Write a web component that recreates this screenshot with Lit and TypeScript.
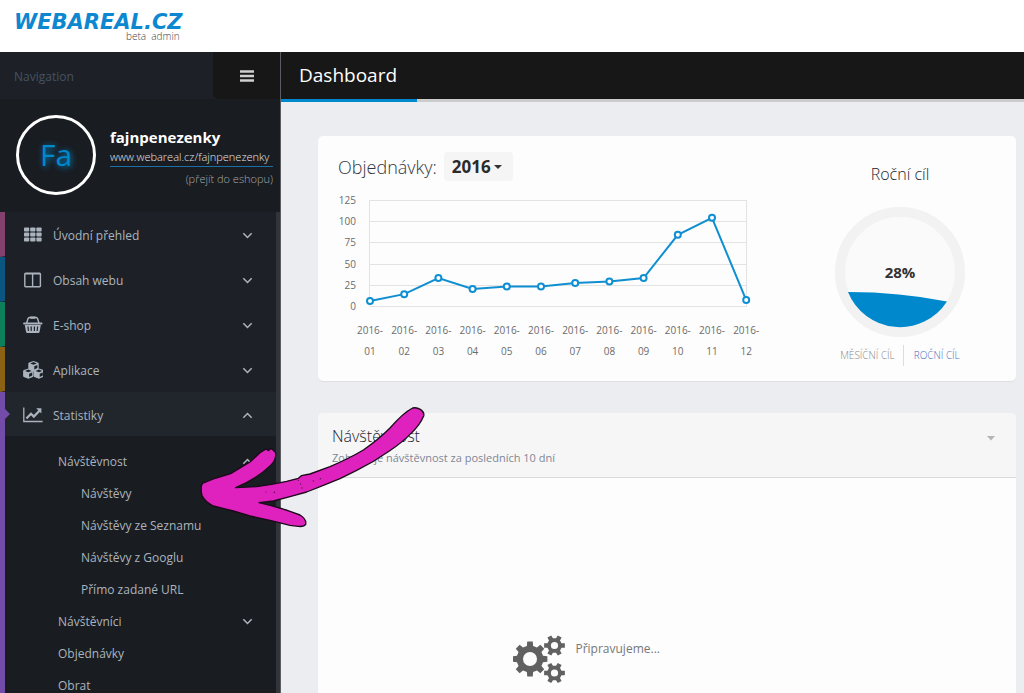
import { LitElement, html, svg, css, nothing } from "lit";
import { customElement } from "lit/decorators.js";
import { classMap } from "lit/directives/class-map.js";

const iconGrid = svg`<g fill="currentColor">${[0, 1, 2].map((r) =>
  [0, 1, 2].map(
    (c) => svg`<rect x=${1 + c * 6.2} y=${2.5 + r * 5} width="5.2" height="4" rx="0.8"/>`
  )
)}</g>`;

const iconColumns = svg`<path fill="none" stroke="currentColor" stroke-width="1.4" d="M2.6 3.2h14a.8.8 0 0 1 .8.8v12a.8.8 0 0 1-.8.8h-14a.8.8 0 0 1-.8-.8V4a.8.8 0 0 1 .8-.8zM9.6 3.2v13.6M1.8 3.9h15.6"/>`;

const iconBasket = svg`
  <path fill="none" stroke="currentColor" stroke-width="1.5" d="M3.6 8.4 5 3.6Q5.300 2.600 6.500 2.600h6.600q1.200 0 1.500 1L16 8.400"/>
  <path fill="currentColor" d="M7.200 1.500h5.200v2.200H7.200zM1 7.600h17.600q.9 0 .9 1t-.9 1H1q-.9 0-.9-1t.9-1z"/>
  <path fill="currentColor" fill-rule="evenodd" d="M1.800 10h16l-1.200 6.800q-.2 1.300-1.400 1.300H4.400q-1.200 0-1.400-1.300zM4.400 11.400l.5 4.600h1.100l-.4-4.600zM7.500 11.400l.2 4.600h1.100v-4.600zM10.800 11.400v4.600h1.100l.2-4.600zM14 11.400l-.4 4.600h1.100l.5-4.600z"/>`;

const cube = (x: number, y: number) => svg`<g transform="translate(${x} ${y})">
  <path fill="currentColor" d="M0-5 4.300-3.500Q5.200-3 5.200-2.200V2.400Q5.200 3.100 4.500 3.500L0 5.400-4.500 3.500Q-5.200 3.100-5.200 2.400V-2.200Q-5.200-3-4.300-3.500z"/>
  <path fill="#1d2127" d="M0-3.800 3.300-2.500 0-1.200-3.300-2.500zM.8.400 3.900-.9v2.900L.8 3.500z"/></g>`;

const iconCubes = svg`${cube(10.500, 5.900)}${cube(5.300, 13.400)}${cube(15.900, 13.400)}`;

const iconChart = svg`
  <path fill="none" stroke="currentColor" stroke-width="1.300" d="M.8 2.500v14h18.800"/>
  <path fill="none" stroke="currentColor" stroke-width="2.300" d="M3.400 13.500 8 8.800l2.800 2.800 5.700-5.900"/>
  <path fill="currentColor" d="M13.200 3.200h5.200v5.200z"/>`;

interface SubItem {
  label: string;
  open?: boolean;
  children?: string[];
}

interface NavItem {
  label: string;
  tone: string;
  icon: unknown;
  sub?: SubItem[];
}

const NAV: NavItem[] = [
  { label: "Úvodní přehled", tone: "plum", icon: iconGrid },
  { label: "Obsah webu", tone: "blue", icon: iconColumns },
  { label: "E-shop", tone: "green", icon: iconBasket },
  { label: "Aplikace", tone: "amber", icon: iconCubes },
  {
    label: "Statistiky",
    tone: "violet",
    icon: iconChart,
    sub: [
      {
        label: "Návštěvnost",
        open: true,
        children: ["Návštěvy", "Návštěvy ze Seznamu", "Návštěvy z Googlu", "Přímo zadané URL"],
      },
      { label: "Návštěvníci", children: [] },
      { label: "Objednávky" },
      { label: "Obrat" },
    ],
  },
];

const chevron = (up = false) => html`<svg class="chevron" viewBox="0 0 10 10" aria-hidden="true">
  <path d=${up ? "M1.200 7 5 3.200 8.800 7" : "M1.200 3 5 6.800 8.800 3"} fill="none" stroke="currentColor" stroke-width="1.400"/>
</svg>`;

function gearPath(cx: number, cy: number, outer: number, root: number, hole: number, teeth: number) {
  const pts: string[] = [];
  const step = (Math.PI * 2) / teeth;
  const at = (r: number, a: number) =>
    `${(cx + r * Math.cos(a)).toFixed(2)} ${(cy + r * Math.sin(a)).toFixed(2)}`;
  for (let i = 0; i < teeth; i++) {
    const a = i * step;
    pts.push(at(root, a - step * 0.3), at(outer, a - step * 0.2), at(outer, a + step * 0.2), at(root, a + step * 0.3));
  }
  return `M${pts.join("L")}ZM${cx - hole} ${cy}a${hole} ${hole} 0 1 0 ${hole * 2} 0a${hole} ${hole} 0 1 0 ${-hole * 2} 0z`;
}

@customElement("side-nav")
export class SideNav extends LitElement {
  static styles = css`
    :host {
      display: block;
      box-sizing: border-box;
      background: #191c21;
      color: #abb4be;
      font-size: 12px;
      border-right: 1px solid #5b5d63;
    }
    .top {
      display: flex;
      height: 47px;
      background: #1d2127;
      color: #465162;
      font-size: 12px;
    }
    .top span {
      flex: 1;
      padding: 0 14px;
      line-height: 50px;
    }
    .toggle {
      width: 67px;
      border: 0;
      padding: 0;
      background: #171717;
      border-radius: 0 0 0 5px;
      color: #d0d0d0;
      cursor: pointer;
    }
    .toggle svg {
      display: block;
      width: 14px;
      height: 12px;
      margin: 0 auto;
    }
    .user {
      display: flex;
      gap: 14px;
      padding: 16px 7px 17px 16px;
      line-height: 20px;
    }
    .avatar {
      box-sizing: border-box;
      flex: none;
      width: 80px;
      height: 80px;
      border: 3px solid #fff;
      border-radius: 50%;
      color: #0088cc;
      text-align: center;
      font-size: 30px;
      line-height: 73px;
      text-shadow: 1px 1px 6px #0088cc;
    }
    .who {
      flex: 1;
      min-width: 0;
      display: flex;
      flex-direction: column;
      padding-top: 12px;
    }
    .name {
      color: #fff;
      font-size: 15px;
      font-weight: 700;
    }
    .who a {
      font-size: 11px;
      font-weight: 300;
      text-decoration: none;
      color: #e4e6e8;
      white-space: nowrap;
      line-height: 19px;
      border-bottom: 1px solid #1c6fa6;
    }
    .who small {
      font-size: 11px;
      font-weight: 300;
      text-align: right;
      color: #a5a8ac;
      line-height: 24px;
    }
    .scroll {
      border-right: 4px solid #32343b;
      background: #1d2127;
    }
    ul {
      list-style: none;
      margin: 0;
      padding: 0;
    }
    button.row {
      font: inherit;
      color: inherit;
      text-align: left;
      width: 100%;
      background: none;
      border: 0;
      cursor: pointer;
    }
    .row {
      box-sizing: border-box;
      display: flex;
      align-items: center;
      height: 32px;
      padding: 0 23px 0 0;
      color: inherit;
      text-decoration: none;
    }
    .row span {
      flex: 1;
    }
    .item {
      border-left: 5px solid var(--tone);
      border-bottom: 1px solid #1d2127;
      position: relative;
    }
    .item > .row {
      height: 44px;
      padding-top: 2px;
      padding-left: 18px;
      gap: 10px;
    }
    .icon {
      flex: none;
      width: 20px;
      height: 20px;
    }
    .chevron {
      flex: none;
      width: 11px;
      height: 11px;
    }
    .active > .row {
      background: #21262d;
    }
    .active::before {
      content: "";
      position: absolute;
      left: 0;
      top: 17px;
      border: 5px solid transparent;
      border-left-color: var(--tone);
      border-right: 0;
    }
    .plum { --tone: #84406f; }
    .blue { --tone: #0b5680; }
    .green { --tone: #0d805b; }
    .amber { --tone: #8b6214; }
    .violet { --tone: #734ba9; }
    .sub {
      background: #191c21;
      padding: 9px 0;
    }
    .sub .row {
      padding-left: 53px;
    }
    .sub .deep {
      padding-left: 76px;
    }
  `;

  render() {
    return html`
      <div class="top">
        <span>Navigation</span>
        <button class="toggle" aria-label="Menu">
          <svg viewBox="0 0 14 12"><path d="M0 1.500h14M0 6h14M0 10.500h14" stroke="currentColor" stroke-width="2.400"/></svg>
        </button>
      </div>
      <div class="user">
        <div class="avatar">Fa</div>
        <div class="who">
          <div class="name">fajnpenezenky</div>
          <a href="#eshop">www.webareal.cz/fajnpenezenky</a>
          <small>(přejít do eshopu)</small>
        </div>
      </div>
      <nav class="scroll">
        <ul>
          ${NAV.map(
            (n) => html`<li class=${classMap({ item: true, [n.tone]: true, active: !!n.sub })}>
              <button class="row" aria-expanded=${n.sub ? "true" : "false"}>
                <svg class="icon" viewBox="0 0 20 20" aria-hidden="true">${n.icon}</svg>
                <span>${n.label}</span>${chevron(!!n.sub)}
              </button>
              ${n.sub ? this.renderSub(n.sub) : nothing}
            </li>`
          )}
        </ul>
      </nav>
    `;
  }

  private renderSub(items: SubItem[]) {
    return html`<ul class="sub">
      ${items.map(
        (s) => html`<li>
          <a class="row" href="#"><span>${s.label}</span>${s.children ? chevron(s.open) : nothing}</a>
          ${s.open
            ? html`<ul>${s.children!.map((c) => html`<li><a class="row deep" href="#">${c}</a></li>`)}</ul>`
            : nothing}
        </li>`
      )}
    </ul>`;
  }
}

const ORDERS = [6, 14, 33, 20, 23, 23, 27, 29, 33, 84, 104, 7];

@customElement("orders-chart")
export class OrdersChart extends LitElement {
  static styles = css`
    :host {
      display: block;
    }
    svg {
      display: block;
      width: 100%;
      height: auto;
      overflow: visible;
    }
    .grid {
      stroke: #e3e3e3;
      fill: none;
      shape-rendering: crispEdges;
    }
    text {
      font-size: 10px;
      fill: #6b6b6b;
    }
    .end {
      text-anchor: end;
    }
    .mid {
      text-anchor: middle;
    }
    .line {
      fill: none;
      stroke: #0f8fd2;
      stroke-width: 2;
    }
    circle {
      fill: #fff;
      stroke: #0f8fd2;
      stroke-width: 2;
    }
  `;

  render() {
    const x = (i: number) => 32 + i * 34.2;
    const y = (v: number) => 116 - v * 0.848;
    return html`<svg viewBox="0 0 446 170" role="img" aria-label="Objednávky">
      ${[0, 25, 50, 75, 100, 125].map(
        (v) => svg`<path class="grid" d="M32 ${Math.round(y(v)) + 0.5}H409"/>
          <text class="end" x="18" y=${Math.round(y(v)) + 4}>${v}</text>`
      )}
      <path class="grid" d="M31.500 10V116M408.500 10V116" />
      <polyline class="line" points=${ORDERS.map((v, i) => `${x(i)},${y(v)}`).join(" ")} />
      ${ORDERS.map(
        (v, i) => svg`<circle cx=${x(i)} cy=${y(v)} r="3"/>
          <text class="mid" x=${x(i)} y="144">2016-</text>
          <text class="mid" x=${x(i)} y="165">${String(i + 1).padStart(2, "0")}</text>`
      )}
    </svg>`;
  }
}

@customElement("app-root")
export class AppRoot extends LitElement {
  static styles = css`
    :host {
      display: flex;
      flex-direction: column;
      position: relative;
      height: 100vh;
      overflow: hidden;
      font-family: "Open Sans", "Noto Sans", sans-serif;
      background: #ecedf0;
      color: #33353f;
    }
    .brand {
      flex: none;
      display: flex;
      height: 52px;
      box-sizing: border-box;
      padding: 13px 14px 0;
      background: #fff;
    }
    .logo {
      display: flex;
      flex-direction: column;
      text-decoration: none;
      color: #0d87cf;
      font: italic 700 21px/18px "DejaVu Sans", sans-serif;
    }
    .logo small {
      font: 300 10px/10px "Open Sans", sans-serif;
      color: #444;
      text-align: right;
      padding-right: 3px;
    }
    .frame {
      flex: 1;
      min-height: 0;
      display: flex;
    }
    side-nav {
      flex: none;
      width: 281px;
    }
    main {
      flex: 1;
      min-width: 0;
      display: flex;
      flex-direction: column;
    }
    .bar {
      flex: none;
      background: #171717;
      border-bottom: 3px solid #ccc;
      display: flex;
    }
    h1 {
      margin: 0 0 -3px;
      padding: 0 20px 0 18px;
      border-bottom: 3px solid #0088cc;
      color: #fff;
      font-size: 19px;
      font-weight: 400;
      line-height: 47px;
    }
    .content {
      flex: 1;
      min-height: 0;
      display: flex;
      flex-direction: column;
      gap: 32px;
      padding: 34px 8px 0 37px;
    }
    .card {
      background: #fdfdfd;
      border-radius: 5px;
      box-shadow: 0 1px 1px rgba(0, 0, 0, 0.06);
    }
    .summary {
      display: flex;
      gap: 20px;
      padding: 16px 20px 15px;
    }
    .orders {
      flex: 1;
      min-width: 0;
    }
    .title {
      display: flex;
      align-items: center;
      gap: 7px;
      height: 29px;
      margin-bottom: 9px;
      font-size: 18px;
      font-weight: 300;
    }
    .pick {
      display: grid;
      align-items: center;
      justify-items: end;
    }
    .pick > * {
      grid-area: 1 / 1;
    }
    select {
      appearance: none;
      height: 29px;
      margin: 0;
      padding: 0 22px 0 8px;
      border: 0;
      border-radius: 4px;
      background: #f5f5f5;
      color: #2b2b2b;
      font: 700 17px "Open Sans", sans-serif;
    }
    .caret {
      width: 8px;
      height: 4px;
      margin-right: 11px;
      pointer-events: none;
    }
    .goal {
      flex: 0 0 192px;
      display: flex;
      flex-direction: column;
      align-items: center;
    }
    h2 {
      margin: 0;
      font-weight: 300;
      font-size: 16px;
      line-height: 24px;
      color: #22242c;
    }
    .goal h2 {
      margin: 10px 0 20px;
    }
    .dial {
      width: 132px;
      height: 132px;
    }
    .dial text {
      font-size: 15px;
      font-weight: 700;
      fill: #333;
      text-anchor: middle;
    }
    .tabs {
      display: flex;
      margin-top: 7px;
      font-size: 10px;
      font-weight: 300;
      line-height: 21px;
    }
    .tabs a {
      padding: 0 10px;
      color: #4a72c0;
      text-decoration: none;
    }
    .tabs .off {
      padding-right: 8px;
      color: #888;
      border-right: 1px solid #ddd;
    }
    .visits {
      flex: 1;
      display: flex;
      flex-direction: column;
      border-radius: 5px 5px 0 0;
    }
    .visits header {
      display: flex;
      justify-content: space-between;
      padding: 11px 21px 10px 14px;
      border-bottom: 1px solid #dadada;
      border-radius: 5px 5px 0 0;
      background: #f6f6f6;
    }
    .visits p {
      margin: 0;
      font-size: 11px;
      line-height: 19px;
      color: #808697;
    }
    .fold {
      align-self: flex-start;
      display: flex;
      margin-top: 12px;
      padding: 0;
      border: 0;
      background: none;
    }
    .fold svg {
      width: 8px;
      height: 5px;
    }
    .loading {
      display: flex;
      gap: 8px;
      padding: 157px 0 0 28%;
      font-size: 12px;
      line-height: 28px;
      color: #777;
    }
    .loading svg {
      width: 54px;
      height: 50px;
    }
    .pointer {
      position: absolute;
      left: 190px;
      top: 395px;
      width: 250px;
      height: 145px;
      pointer-events: none;
    }
  `;

  render() {
    return html`
      <div class="brand">
        <a class="logo" href="#">WEBAREAL.CZ<small>beta&nbsp; admin</small></a>
      </div>
      <div class="frame">
        <side-nav></side-nav>
        <main>
          <div class="bar"><h1>Dashboard</h1></div>
          <div class="content">
            <section class="card summary">
              <div class="orders">
                <div class="title">
                  <label for="year">Objednávky:</label>
                  <div class="pick">
                    <select id="year"><option>2016</option></select>
                    <svg class="caret" viewBox="0 0 8 4"><path d="M0 0h8L4 4z" fill="#333"/></svg>
                  </div>
                </div>
                <orders-chart></orders-chart>
              </div>
              <div class="goal">
                <h2>Roční cíl</h2>
                <svg class="dial" viewBox="-66 -66 132 132">
                  <circle r="60" fill="#fafafa" stroke="#f2f2f2" stroke-width="10"/>
                  <path d="M-52 20Q0 20 47 29.500A56 56 0 0 1-52 20z" fill="#0088cc"/>
                  <text x="0" y="6">28%</text>
                </svg>
                <div class="tabs">
                  <a class="off" href="#mesic">MĚSÍČNÍ CÍL</a><a href="#rok">ROČNÍ CÍL</a>
                </div>
              </div>
            </section>
            <section class="card visits">
              <header>
                <div>
                  <h2>Návštěvnost</h2>
                  <p>Zobrazuje návštěvnost za posledních 10 dní</p>
                </div>
                <button class="fold" aria-label="Sbalit">
                  <svg viewBox="0 0 8 5"><path d="M0 0h8L4 4.500z" fill="#b4b4b4"/></svg>
                </button>
              </header>
              <div class="loading">
                <svg viewBox="1 0 54 50" fill="#616161" fill-rule="evenodd">
                  <path d=${gearPath(18, 24, 17.6, 13.4, 7, 8)} />
                  <path d=${gearPath(42.5, 10.500, 10.6, 7.4, 3.6, 6)} />
                  <path d=${gearPath(42.5, 38, 10.6, 7.4, 3.6, 6)} />
                </svg>
                <span>Připravujeme...</span>
              </div>
            </section>
          </div>
        </main>
      </div>
      <svg class="pointer" viewBox="0 0 750 435" aria-hidden="true">
        <path
          fill="#df22bd" stroke="#1c0a1c" stroke-width="4" stroke-linejoin="round"
          d="M668 39Q680 36 692 44Q704 52 701 63Q690 90 662 116Q640 140 598 168Q550 202 500 226L450 251L400 271L350 291L300 305L250 318L207 323Q260 335 300 349L330 360Q350 372 347 388Q342 396 325 394L300 391L240 376L180 363L130 348L70 333Q46 322 36 302Q30 275 38 264L48 261L78 249L122 236L180 201L210 173L228 162L236 167L242 160L250 166Q260 172 257 182Q256 198 240 213Q200 252 137 278L200 275L245 268L290 259L325 250L334 242L360 237L420 215Q480 189 520 165Q565 134 600 99Q640 53 668 39Z"
        />
        <g fill="#5c1050"><circle cx="253" cy="292" r="2.500"/><circle cx="228" cy="291" r="1.800"/><circle cx="336" cy="279" r="2"/><circle cx="332" cy="267" r="2"/><circle cx="325" cy="256" r="2"/><circle cx="370" cy="258" r="2"/><circle cx="391" cy="251" r="2.200"/></g>
      </svg>
    `;
  }
}
